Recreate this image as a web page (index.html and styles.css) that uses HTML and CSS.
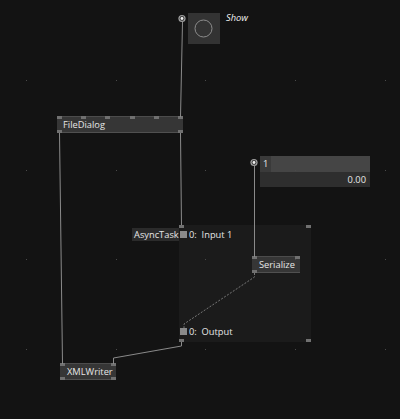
FILE: index.html
```html
<!DOCTYPE html>
<html lang="en">
<head>
    <meta charset="UTF-8">
    <title>Patch</title>
    <link rel="stylesheet" href="styles.css">
</head>
<body>
    <div class="canvas">
        <!-- wires + grid -->
        <svg class="wires" width="400" height="419" viewBox="0 0 400 419">
            <g fill="#4a4a4a">
                <rect x="26" y="80" width="1" height="1"/><rect x="116" y="80" width="1" height="1"/><rect x="205" y="80" width="1" height="1"/><rect x="295" y="80" width="1" height="1"/><rect x="385" y="80" width="1" height="1"/>
                <rect x="26" y="170" width="1" height="1"/><rect x="116" y="170" width="1" height="1"/><rect x="205" y="170" width="1" height="1"/><rect x="295" y="170" width="1" height="1"/><rect x="385" y="170" width="1" height="1"/>
                <rect x="26" y="259" width="1" height="1"/><rect x="116" y="259" width="1" height="1"/><rect x="205" y="259" width="1" height="1"/><rect x="295" y="259" width="1" height="1"/><rect x="385" y="259" width="1" height="1"/>
                <rect x="26" y="349" width="1" height="1"/><rect x="116" y="349" width="1" height="1"/><rect x="205" y="349" width="1" height="1"/><rect x="295" y="349" width="1" height="1"/><rect x="385" y="349" width="1" height="1"/>
            </g>
            <g stroke="#8a8a8a" stroke-width="1" fill="none">
                <path d="M182.5 22 L180.5 117"/>
                <path d="M180.5 133 L181.5 227"/>
                <path d="M59.5 133 L62.5 364"/>
                <path d="M254.5 166 L254.5 257"/>
                <path d="M181.5 341 L181.5 346 L113.5 358 L113.5 364"/>
                <path d="M254.5 273 L254.5 277 L184 324 L184 328" stroke-dasharray="2 1.5" stroke="#777"/>
            </g>
            <g>
                <circle cx="182" cy="18.5" r="3.6" fill="#a0a0a0"/>
                <circle cx="182" cy="18.5" r="2.4" fill="#3a3a3a"/>
                <circle cx="182" cy="18.5" r="1.4" fill="#f0f0f0"/>
                <circle cx="254" cy="162.5" r="3.6" fill="#a0a0a0"/>
                <circle cx="254" cy="162.5" r="2.4" fill="#3a3a3a"/>
                <circle cx="254" cy="162.5" r="1.4" fill="#f0f0f0"/>
            </g>
        </svg>

        <!-- Show toggle -->
        <div class="toggle">
            <svg width="32" height="31" viewBox="0 0 32 31"><circle cx="15.5" cy="15.5" r="8.5" stroke="#8c8c8c" stroke-width="1" fill="none"/></svg>
        </div>
        <div class="toggle-label">Show</div>

        <!-- FileDialog -->
        <div class="node file-dialog">
            <span>FileDialog</span>
            <i class="port" style="left: 0; top: -1px"></i>
            <i class="port" style="left: 24px; top: -1px"></i>
            <i class="port" style="left: 48px; top: -1px"></i>
            <i class="port" style="left: 73px; top: -1px"></i>
            <i class="port" style="left: 97px; top: -1px"></i>
            <i class="port" style="left: 121px; top: -1px"></i>
            <i class="port" style="left: 0; bottom: -1px"></i>
            <i class="port" style="left: 121px; bottom: -1px"></i>
        </div>

        <!-- number widget -->
        <div class="number">
            <div class="number-top"><span class="number-id">1</span></div>
            <div class="number-value">0.00</div>
        </div>

        <!-- AsyncTask group -->
        <div class="group">
            <i class="port" style="left: 0; top: 0"></i>
            <i class="port" style="right: 0; top: 0"></i>
            <i class="port" style="left: 0; bottom: 0"></i>
            <i class="port" style="right: 0; bottom: 0"></i>
            <div class="group-row group-input"><b class="slot"></b>0:&nbsp; Input 1</div>
            <div class="group-row group-output"><b class="slot"></b>0:&nbsp; Output</div>
        </div>
        <div class="group-label">AsyncTask</div>

        <!-- Serialize -->
        <div class="node serialize">
            <span>Serialize</span>
            <i class="port" style="left: 0; top: -1px"></i>
            <i class="port" style="right: 0; top: -1px"></i>
            <i class="port" style="left: 0; bottom: -1px"></i>
        </div>

        <!-- XMLWriter -->
        <div class="node xml-writer">
            <span>XMLWriter</span>
            <i class="port" style="left: 0; top: -1px"></i>
            <i class="port" style="right: 0; top: -1px"></i>
            <i class="port" style="left: 0; bottom: -1px"></i>
            <i class="port" style="right: 0; bottom: -1px"></i>
        </div>
    </div>
</body>
</html>
```

FILE: styles.css
```css
body {
    margin: 0;
    background-color: #131313;
    font-family: 'Open Sans', sans-serif;
    font-size: 9.3px;
    color: #e6e6e6;
    overflow: hidden;
}

.canvas {
    position: relative;
    width: 400px;
    height: 419px;
}

.wires {
    position: absolute;
    left: 0;
    top: 0;
    z-index: 2;
    pointer-events: none;
}

/* Nodes */
.node {
    position: absolute;
    box-sizing: border-box;
    background-color: #363636;
    border-top: 1px solid #4c4c4c;
    border-bottom: 1px solid #505050;
    display: flex;
    align-items: center;
    z-index: 1;
}

.node span {
    padding-left: 7px;
}

.port {
    position: absolute;
    width: 5px;
    height: 3px;
    background-color: #707070;
    z-index: 3;
}

.file-dialog {
    left: 57px;
    top: 116px;
    width: 126px;
    height: 17px;
}

.file-dialog span {
    padding-left: 6px;
}

.serialize {
    left: 252px;
    top: 256px;
    width: 48px;
    height: 17px;
}

.xml-writer {
    left: 60px;
    top: 363px;
    width: 56px;
    height: 17px;
}

/* Show toggle */
.toggle {
    position: absolute;
    left: 188px;
    top: 13px;
    width: 32px;
    height: 31px;
    background-color: #333;
}

.toggle svg {
    display: block;
}

.toggle-label {
    position: absolute;
    left: 226px;
    top: 11px;
    font-style: italic;
    color: #f2f2f2;
}

/* Number widget */
.number {
    position: absolute;
    left: 260px;
    top: 156px;
    width: 110px;
    height: 31px;
    display: flex;
    flex-direction: column;
}

.number-top {
    height: 16px;
    background-color: #454545;
    display: flex;
}

.number-id {
    width: 11px;
    background-color: #3a3a3a;
    padding-left: 3px;
    box-sizing: border-box;
    line-height: 16px;
}

.number-value {
    flex: 1;
    background-color: #2e2e2e;
    text-align: right;
    padding-right: 4px;
    line-height: 15px;
}

/* AsyncTask group */
.group {
    position: absolute;
    left: 179px;
    top: 225px;
    width: 132px;
    height: 117px;
    background-color: #1b1b1b;
}

.group-row {
    position: absolute;
    left: 1px;
    display: flex;
    align-items: center;
    gap: 2px;
}

.group-input {
    top: 3px;
}

.group-output {
    top: 100px;
}

.slot {
    width: 7px;
    height: 7px;
    background-color: #8a8a8a;
}

.group-label {
    position: absolute;
    left: 132px;
    top: 228px;
    width: 47px;
    height: 13px;
    line-height: 13px;
    background-color: #2b2b2b;
    padding-left: 2px;
    box-sizing: border-box;
}
```
